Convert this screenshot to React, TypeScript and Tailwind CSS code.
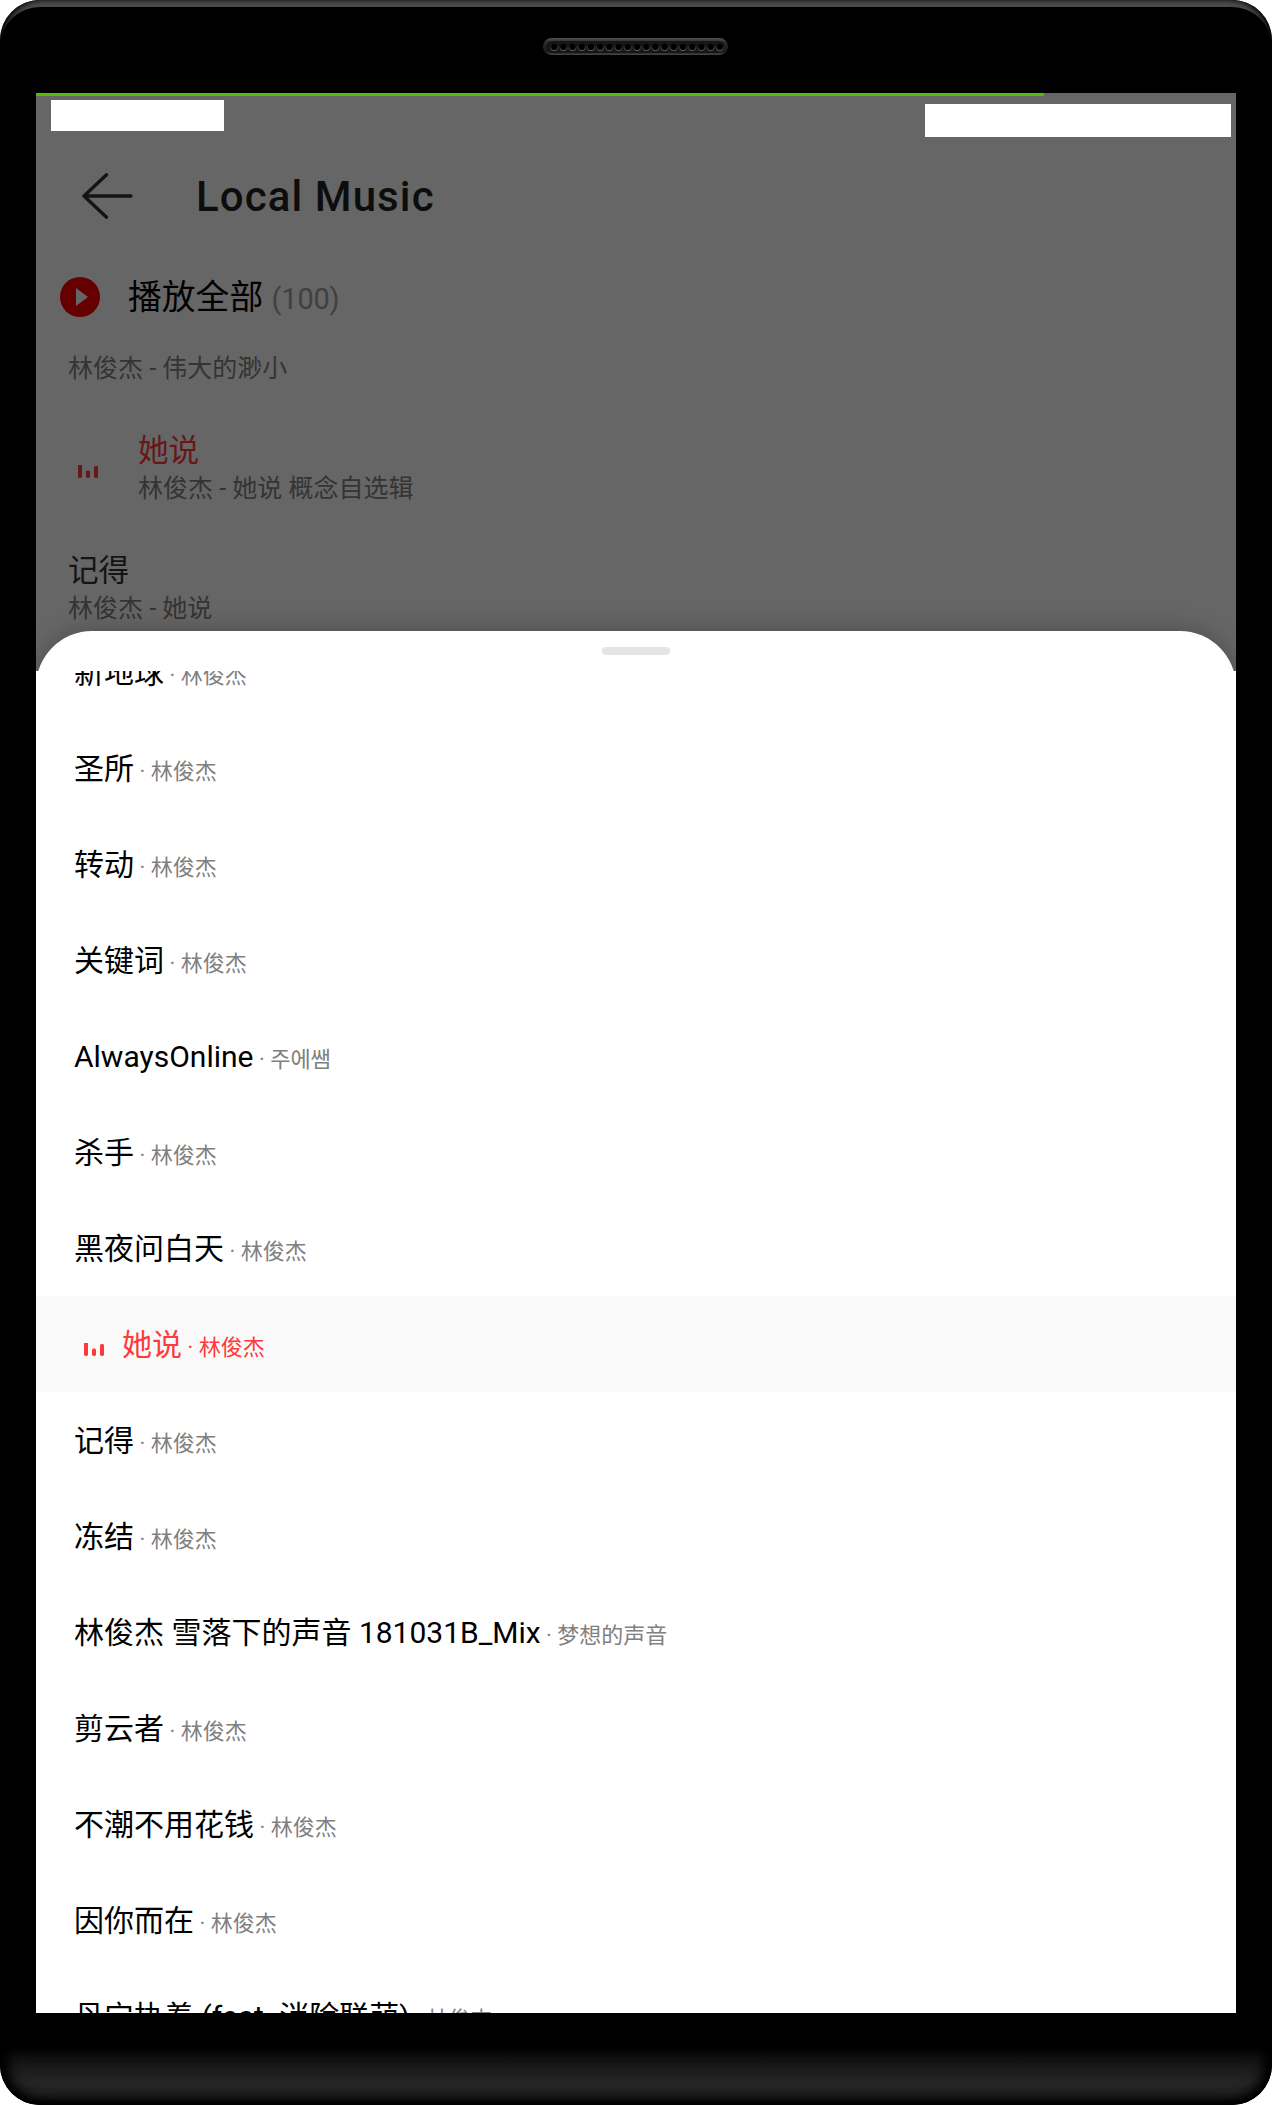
const SANS = "font-[Roboto,'Noto_Sans_CJK_SC',sans-serif]";

type Song = { title: string; artist: string; active?: boolean };

const queue: Song[] = [
  { title: "新地球", artist: "林俊杰" },
  { title: "圣所", artist: "林俊杰" },
  { title: "转动", artist: "林俊杰" },
  { title: "关键词", artist: "林俊杰" },
  { title: "AlwaysOnline", artist: "주에쌤" },
  { title: "杀手", artist: "林俊杰" },
  { title: "黑夜问白天", artist: "林俊杰" },
  { title: "她说", artist: "林俊杰", active: true },
  { title: "记得", artist: "林俊杰" },
  { title: "冻结", artist: "林俊杰" },
  { title: "林俊杰 雪落下的声音 181031B_Mix", artist: "梦想的声音" },
  { title: "剪云者", artist: "林俊杰" },
  { title: "不潮不用花钱", artist: "林俊杰" },
  { title: "因你而在", artist: "林俊杰" },
  { title: "丹宁执着 (feat. 消除联萌)", artist: "林俊杰" },
];

function Bars({ className }: { className: string }) {
  return (
    <svg width="20" height="13" viewBox="0 0 20 13" className={className} fill="currentColor">
      <path d="M0 0h4v11.5l-1 1.5h-2l-1-1.5z" />
      <path d="M8 6.5l1-1h2l1 1v5l-1 1.5h-2l-1-1.5z" />
      <path d="M16 2l1-1h2l1 1v9.5l-1 1.5h-2l-1-1.5z" />
    </svg>
  );
}

function Speaker() {
  const holes = Array.from({ length: 19 }, (_, i) => 11.2 + i * 9.2);
  return (
    <svg width="186" height="17" viewBox="0 0 186 17">
      <defs>
        <linearGradient id="rim" x1="0" y1="0" x2="0" y2="1">
          <stop offset="0" stopColor="#505050" />
          <stop offset="0.25" stopColor="#2c2c2c" />
          <stop offset="0.8" stopColor="#1c1c1c" />
          <stop offset="1" stopColor="#484848" />
        </linearGradient>
        <linearGradient id="hole" x1="0" y1="0" x2="0" y2="1">
          <stop offset="0.3" stopColor="#191919" />
          <stop offset="1" stopColor="#666666" />
        </linearGradient>
      </defs>
      <rect width="185" height="17" rx="8.5" fill="url(#rim)" />
      <rect x="3" y="3" width="179" height="12" rx="6" fill="#161616" />
      {holes.map((x) => (
        <circle key={x} cx={x} cy="9" r="3.7" fill="#000000" stroke="url(#hole)" strokeWidth="1" />
      ))}
    </svg>
  );
}

function QueueRow({ title, artist, active }: Song) {
  return (
    <li
      className={
        active
          ? "flex h-24 shrink-0 items-center bg-[#f9f9f9] pl-12 text-[#ff3a3a]"
          : "flex h-24 shrink-0 items-center pl-[38px] text-black"
      }
    >
      {active && <Bars className="mt-[11px] mr-[18px]" />}
      <p className="mt-1 text-[30px] leading-[44px] whitespace-pre">
        {title}
        <span className={active ? "text-[22px]" : "text-[22px] text-[#808080]"}> · {artist}</span>
      </p>
    </li>
  );
}

export default function App() {
  return (
    <div className={`flex h-[2105px] w-[1272px] flex-col overflow-hidden rounded-[40px] bg-black ${SANS}`} lang="zh-CN">
      <div className="flex h-[93px] shrink-0 justify-center rounded-t-[40px] bg-black pt-[38px] shadow-[inset_6px_0_6px_-2px_#000,inset_-6px_0_6px_-2px_#000,inset_0_7px_0_#4b4b4b]">
        <Speaker />
      </div>

      <main className="mx-9 flex h-[1920px] shrink-0 flex-col overflow-hidden bg-[#666666]">
        <div className="h-[3px] w-[1008px] shrink-0 bg-[#4cc005]" />
        <div className="flex h-[62px] shrink-0 items-start justify-between pr-[5px] pl-[15px]">
          <div className="mt-1 h-[31px] w-[173px] bg-white" />
          <div className="mt-2 h-[33px] w-[306px] bg-white" />
        </div>

        <header className="flex h-[76px] shrink-0 items-center pl-[46px]">
          <svg width="51" height="46" viewBox="0 0 51 46" fill="none" stroke="#141414" strokeWidth="3.4" strokeLinecap="round" strokeLinejoin="round">
            <path d="M49 23H2M24.5 1.8L2 23L24.5 44.2" />
          </svg>
          <h1 className="mt-px ml-[63px] text-[42px] leading-[50px] font-medium tracking-[1.1px] text-[#0d0d0d]">Local Music</h1>
        </header>

        <section className="flex h-[126px] shrink-0 items-center pl-6">
          <svg width="40" height="40" viewBox="0 0 40 40">
            <circle cx="20" cy="20" r="20" fill="#660000" />
            <path d="M16 11v18l12-9z" fill="#666666" />
          </svg>
          <p className="mt-[3px] ml-7 text-[33.8px] leading-[50px] whitespace-pre text-black">
            播放全部 <span className="text-[29px] tracking-[-0.2px] text-[#404040]">(100)</span>
          </p>
        </section>

        <div className="flex h-[271px] shrink-0 flex-col text-[25px] leading-[37px] text-[#343434]">
          <p className="-mt-[10px] h-[78px] shrink-0 pl-8">林俊杰 - 伟大的渺小</p>
          <div className="flex h-[120px] shrink-0 pl-[42px]">
            <Bars className="mt-[37px] mr-10 text-[#661717]" />
            <div className="flex flex-col">
              <span className="text-[30.6px] leading-[45px] text-[#661717]">她说</span>
              <span className="-mt-[3px]">林俊杰 - 她说 概念自选辑</span>
            </div>
          </div>
          <div className="flex h-[83px] shrink-0 flex-col pl-8">
            <span className="text-[30.6px] leading-[45px] text-[#141414]">记得</span>
            <span className="-mt-[3px]">林俊杰 - 她说</span>
          </div>
        </div>

        <section className="relative -mb-[60px] flex h-[100px] shrink-0 justify-center rounded-t-[56px] bg-white pt-4 shadow-[0_-2px_24px_rgba(0,0,0,0.22)]">
          <div className="h-2 w-[68px] rounded-full bg-[#e5e5e5]" />
        </section>
        <div className="relative flex min-h-0 flex-1 flex-col overflow-hidden bg-white">
          <ul className="-mt-[47px] flex flex-col">
            {queue.map((song) => (
              <QueueRow key={song.title} {...song} />
            ))}
          </ul>
        </div>
      </main>

      <div className="h-[34px] shrink-0 bg-black" />
      <div className="h-[58px] shrink-0 rounded-b-[40px] bg-linear-to-b from-[#0a0a0a] via-[#252525] via-60% to-[#1d1d1d] shadow-[inset_0_-4px_8px_#000,inset_8px_0_14px_#000,inset_-8px_0_14px_#000]" />
    </div>
  );
}
